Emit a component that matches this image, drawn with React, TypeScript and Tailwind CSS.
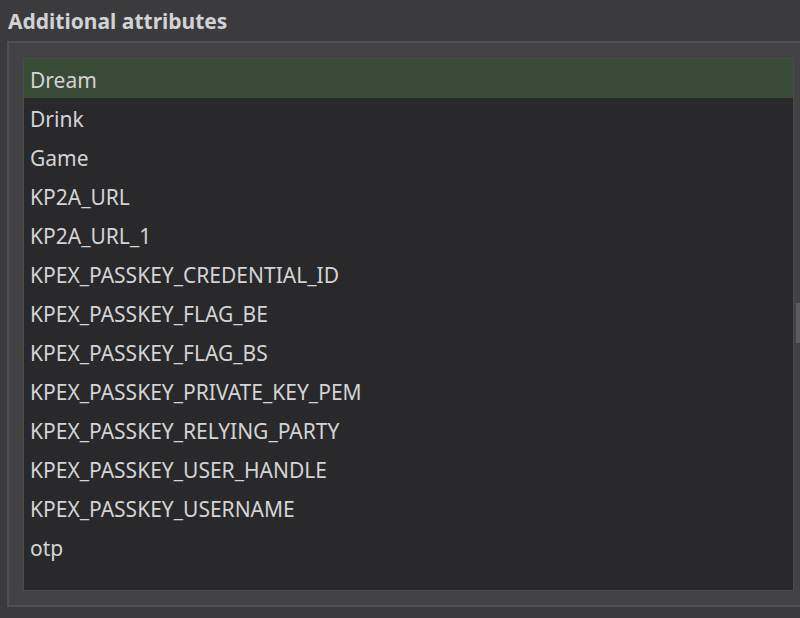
import React from "react";

const items = [
  "Dream",
  "Drink",
  "Game",
  "KP2A_URL",
  "KP2A_URL_1",
  "KPEX_PASSKEY_CREDENTIAL_ID",
  "KPEX_PASSKEY_FLAG_BE",
  "KPEX_PASSKEY_FLAG_BS",
  "KPEX_PASSKEY_PRIVATE_KEY_PEM",
  "KPEX_PASSKEY_RELYING_PARTY",
  "KPEX_PASSKEY_USER_HANDLE",
  "KPEX_PASSKEY_USERNAME",
  "otp",
];

export default function App() {
  return (
    <div
      className="relative w-[800px] h-[618px] overflow-hidden bg-[#3b3b3e] flex flex-col"
      style={{ fontFamily: '"Noto Sans", "Open Sans", sans-serif' }}
    >
      <div className="h-[41px] shrink-0 pl-[8px] pt-[6px] text-[21px] leading-[30px] font-bold text-[#d2d2d4]">
        Additional attributes
      </div>
      <div className="ml-[7px] h-[566px] shrink-0 border-l-2 border-t-2 border-b-2 border-[#4f4f52] bg-[#424245] pl-[14px] pt-[15px] pr-[6px] pb-[14px] flex">
        <div className="flex-1 border border-[#4b4b4e] bg-[#29292b] flex flex-col">
          {items.map((it, i) => (
            <div
              key={it}
              className={
                "h-[39px] shrink-0 flex items-center pl-[6px] pt-[4px] text-[21px] text-[#d4d4d6] " +
                (i === 0 ? "bg-[#394a37] text-[#cbd4c8]" : "")
              }
            >
              {it}
            </div>
          ))}
        </div>
      </div>
      <div className="absolute left-[796px] top-[303px] w-[4px] h-[40px] bg-[#5c5c5f]" />
    </div>
  );
}
